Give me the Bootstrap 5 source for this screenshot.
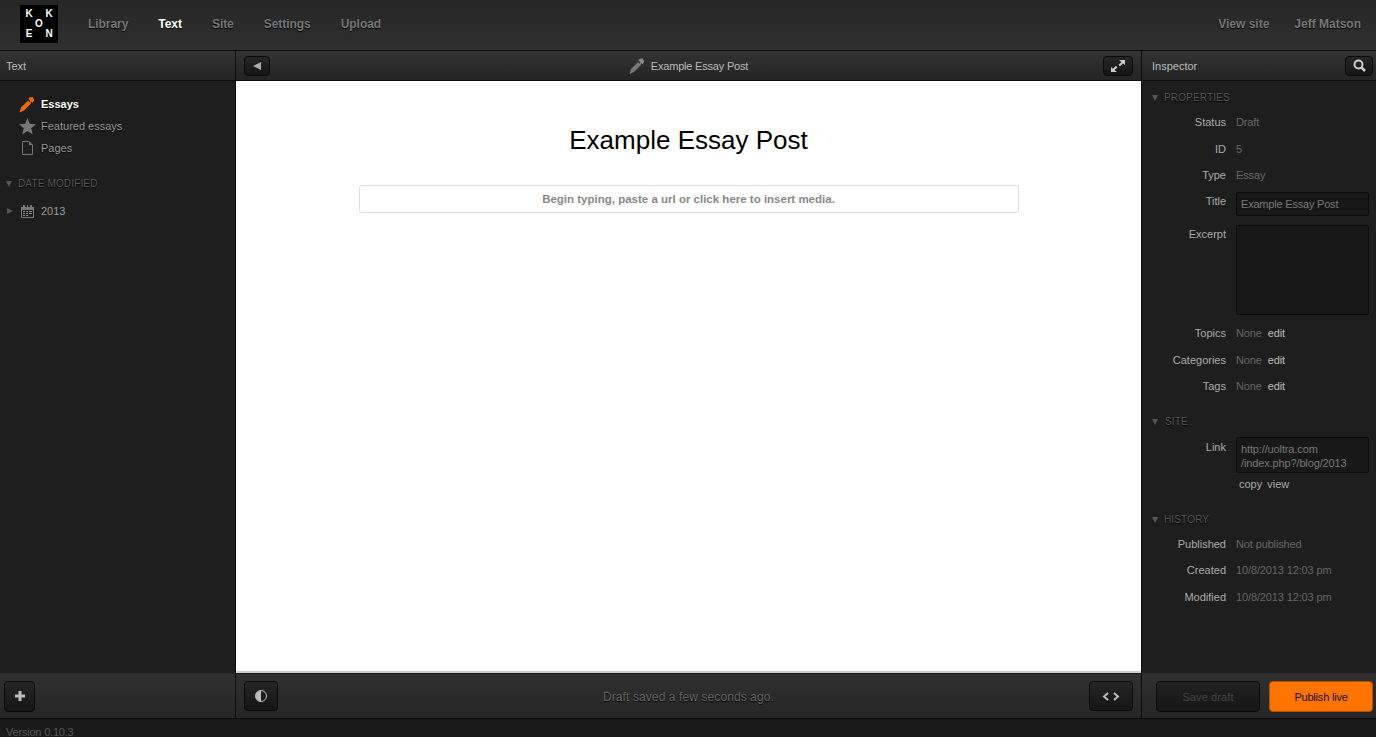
<!DOCTYPE html>
<html lang="en">
<head>
<meta charset="utf-8">
<title>Koken</title>
<link rel="stylesheet" href="https://cdn.jsdelivr.net/npm/bootstrap@5.3.0/dist/css/bootstrap.min.css">
<style>
html,body{height:100%;overflow:hidden}
body{width:1376px;height:737px;background:#1a1a1a;font-family:"Liberation Sans",Arial,sans-serif;font-size:11px;color:#999;line-height:14px;display:flex;flex-direction:column}
a{text-decoration:none;color:inherit}
.kk-top{height:51px;flex:none;background:linear-gradient(#262626,#303030);border-bottom:1px solid #0c0c0c;padding:5px 15px 0 20px}
.kk-logo{width:38px;height:38px;background:#000;color:#fff;font-weight:700;font-size:10px;line-height:10px;display:grid;grid-template-columns:repeat(3,minmax(0,1fr));grid-template-rows:repeat(3,minmax(0,1fr));padding:4px;margin-right:30px;text-align:center;align-items:center;justify-items:center}
.kk-nav{gap:30px;font-size:12px;font-weight:700;color:#777;height:38px;text-shadow:0 1px 1px #000;letter-spacing:-.05px}
.kk-nav .on{color:#fff}
.kk-nav .kk-r{letter-spacing:0}
.kk-mid{flex:1;min-height:0}
.kk-left{width:236px;flex:none;border-right:1px solid #0c0c0c;background:#1e1e1e}
.kk-right{width:235px;flex:none;border-left:1px solid #0c0c0c;background:#1e1e1e}
.kk-center{flex:1;min-width:0}
.kk-head{height:30px;flex:none;background:linear-gradient(#333,#242424);border-bottom:1px solid #0c0c0c;color:#bbb;padding:0 6px}
.kk-foot{height:45px;flex:none;background:linear-gradient(#303030,#262626);border-top:1px solid #2c2c2c}
.kk-body{flex:1;min-height:0}
.kk-btn{background:linear-gradient(#262626,#151515);border:1px solid #0a0a0a;border-radius:4px;display:flex;align-items:center;justify-content:center;padding:0}
.kk-menu{padding:12px 0 0 17px}
.kk-item{height:22px;color:#999;text-shadow:0 1px 1px #000}
.kk-item.on{color:#fff;font-weight:700}
.kk-ico{width:21px;flex:none;display:flex;justify-content:center;margin-right:3px}
.kk-sec{font-size:10px;color:#555;letter-spacing:.15px;text-shadow:0 1px 1px #000;height:14px}
.kk-tri{width:0;height:0;border-left:3.5px solid transparent;border-right:3.5px solid transparent;border-top:6px solid #555;margin-right:6px}
.kk-trir{width:0;height:0;border-top:3.5px solid transparent;border-bottom:3.5px solid transparent;border-left:6px solid #555}
.kk-canvas{background:#fff;flex:1;border-bottom:2px solid #ccc;padding-top:44px}
.kk-h{font-size:26px;line-height:30px;color:#000;font-weight:400;text-align:center;margin:0 0 30px}
.kk-insert{width:660px;height:28px;border:1px solid #ddd;border-radius:3px;margin:0 auto;color:#888;font-weight:700;font-size:11.5px;display:flex;align-items:center;justify-content:center}
.kk-title{letter-spacing:-.2px}
.kk-status{color:#666;font-size:12px;letter-spacing:.1px;flex:1;text-align:center;padding-top:1px;text-shadow:0 1px 1px #000}
.kk-row{display:flex}
.kk-lab{width:84px;text-align:right;margin-right:10px;color:#aaa;flex:none}
.kk-val{color:#666;letter-spacing:-.13px}
.kk-edit{color:#bbb;margin-left:6px;letter-spacing:-.13px}
.kk-field{width:133px;background:#181818;border:1px solid #0c0c0c;border-radius:2px;color:#777}
.kk-save{width:104px;height:31px;color:#444;background:linear-gradient(#222,#161616);padding-top:2px;letter-spacing:.1px}
.kk-pub{width:104px;height:31px;background:#ff7300;color:#111;border:1px solid #b55200;border-radius:4px;padding:2px 0 0;letter-spacing:-.2px}
.kk-ver{height:19px;flex:none;background:#1a1a1a;border-top:1px solid #0c0c0c;padding:6px 0 0 6px;color:#555;line-height:14px;letter-spacing:-.2px}
</style>
</head>
<body>
<header class="kk-top d-flex align-items-start">
  <div class="kk-logo"><span>K</span><span></span><span>K</span><span></span><span>O</span><span></span><span>E</span><span></span><span>N</span></div>
  <nav class="kk-nav d-flex align-items-center flex-grow-1">
    <a href="#">Library</a><a href="#" class="on">Text</a><a href="#">Site</a><a href="#">Settings</a><a href="#">Upload</a>
    <a href="#" class="ms-auto kk-r">View site</a><a href="#" class="kk-r" style="margin-left:-5px">Jeff Matson</a>
  </nav>
</header>
<div class="kk-mid d-flex">
  <aside class="kk-left d-flex flex-column">
    <div class="kk-head d-flex align-items-center">Text</div>
    <div class="kk-body">
      <div class="kk-menu d-flex flex-column">
        <a href="#" class="kk-item on d-flex align-items-center"><span class="kk-ico"><svg width="17" height="17" viewBox="0 0 17 17"><path d="M.5 16.500l1.500-5L9 4.500l3 3-7 7z" fill="#f26a00"/><path d="M10.500 1.500c2-2 6 1.500 4 4l-1.200 1.200L9.300 2.700z" fill="#f26a00"/><path d="M13.800 1l-3 6.500" stroke="#f26a00" stroke-width="1"/></svg></span><span>Essays</span></a>
        <a href="#" class="kk-item d-flex align-items-center"><span class="kk-ico"><svg width="17" height="17" viewBox="0 0 17 17"><path d="M8.500 0l2.300 5.800 6.200.4-4.800 4 1.600 6.200-5.300-3.400-5.300 3.400 1.600-6.200L0 6.200l6.200-.4z" fill="#777"/></svg></span><span>Featured essays</span></a>
        <a href="#" class="kk-item d-flex align-items-center"><span class="kk-ico"><svg width="11" height="14" viewBox="0 0 11 14"><path d="M.5.5h6.500l3.500 3.500v9.500h-10z" fill="none" stroke="#777"/><path d="M7 .5v3.500h3.500z" fill="#777"/></svg></span><span>Pages</span></a>
      </div>
      <div class="kk-sec d-flex align-items-center" style="margin:18px 0 0 6px">
        <span class="kk-tri"></span>DATE MODIFIED
      </div>
      <div class="d-flex align-items-center" style="margin:13px 0 0 7px;height:14px">
        <span class="kk-trir" style="margin-right:8px"></span>
        <svg width="13" height="13" viewBox="0 0 13 13" style="margin-right:7px"><path d="M0 2h13v11H0z" fill="#777"/><path d="M1 5h11v7H1z" fill="#1e1e1e"/><path d="M2 0h2v3H2zM6 0h1v3H6zM9 0h2v3H9z" fill="#777"/><path d="M2 6h2v1H2zM5 6h2v1H5zM8 6h3v1H8zM2 8h2v1H2zM5 8h2v1H5zM8 8h3v1H8zM2 10h2v1H2zM5 10h2v1H5z" fill="#888"/></svg>
        <span>2013</span>
      </div>
    </div>
    <div class="kk-foot d-flex align-items-center" style="padding-left:4px">
      <button class="kk-btn" style="width:31px;height:31px" aria-label="Add"><svg width="10" height="10" viewBox="0 0 10 10"><path d="M3.500 0h3v3.500H10v3H6.500V10h-3V6.500H0v-3h3.500z" fill="#bbb"/></svg></button>
    </div>
  </aside>
  <main class="kk-center d-flex flex-column">
    <div class="kk-head d-flex align-items-center" style="padding:0 8px">
      <button class="kk-btn" style="width:26px;height:20px" aria-label="Back"><span style="width:0;height:0;border-top:4px solid transparent;border-bottom:4px solid transparent;border-right:8px solid #aaa"></span></button>
      <div class="d-flex align-items-center justify-content-center flex-grow-1 kk-title" style="gap:5px;margin-left:4px">
        <svg width="17" height="18" viewBox="0 0 17 17"><path d="M.5 16.500l1.500-5L9 4.500l3 3-7 7z" fill="#777"/><path d="M10.500 1.500c2-2 6 1.500 4 4l-1.200 1.200L9.300 2.700z" fill="#888"/><path d="M13.800 1l-3 6.500" stroke="#888" stroke-width="1"/></svg>
        <span>Example Essay Post</span>
      </div>
      <button class="kk-btn" style="width:30px;height:20px" aria-label="Expand"><svg width="14" height="12" viewBox="0 0 14 12"><path d="M8 0h6v5l-2-1.800-3 3-1.500-1.500 3-2.700zM6 12H0V7l2 1.800 3-3 1.500 1.500-3 2.700z" fill="#ccc"/></svg></button>
    </div>
    <div class="kk-canvas">
      <h1 class="kk-h">Example Essay Post</h1>
      <div class="kk-insert">Begin typing, paste a url or click here to insert media.</div>
    </div>
    <div class="kk-foot d-flex align-items-center" style="padding:0 8px;border-top-color:#1a1a1a">
      <button class="kk-btn" style="width:34px;height:30px;margin-right:10px" aria-label="Contrast"><svg width="12" height="12" viewBox="0 0 12 12"><circle cx="6" cy="6" r="5.500" fill="none" stroke="#bbb"/><path d="M6 .5a5.500 5.500 0 0 0 0 11z" fill="#bbb"/></svg></button>
      <span class="kk-status">Draft saved a few seconds ago.</span>
      <button class="kk-btn" style="width:44px;height:30px" aria-label="Code"><svg width="18" height="9" viewBox="0 0 18 9"><path d="M6 1L2 4.500 6 8M12 1l4 3.500L12 8" fill="none" stroke="#bbb" stroke-width="2"/></svg></button>
    </div>
  </main>
  <aside class="kk-right d-flex flex-column">
    <div class="kk-head d-flex align-items-center justify-content-between" style="padding:0 3px 0 10px">
      <span>Inspector</span>
      <button class="kk-btn" style="width:28px;height:20px" aria-label="Search"><svg width="13" height="13" viewBox="0 0 13 13"><circle cx="5.500" cy="5.500" r="4" fill="none" stroke="#ccc" stroke-width="2"/><path d="M8.500 8.500L12 12" stroke="#ccc" stroke-width="2.500"/></svg></button>
    </div>
    <div class="kk-body">
      <div class="kk-sec d-flex align-items-center" style="margin:10px 0 0 10px"><span class="kk-tri"></span>PROPERTIES</div>
      <div class="kk-row" style="margin-top:10px"><span class="kk-lab">Status</span><span class="kk-val">Draft</span></div>
      <div class="kk-row" style="margin-top:13px"><span class="kk-lab">ID</span><span class="kk-val">5</span></div>
      <div class="kk-row" style="margin-top:12px"><span class="kk-lab">Type</span><span class="kk-val">Essay</span></div>
      <div class="kk-row" style="margin-top:10px"><span class="kk-lab" style="padding-top:2px">Title</span><div class="kk-field kk-title" style="height:24px;padding:4px 4px">Example Essay Post</div></div>
      <div class="kk-row" style="margin-top:9px"><span class="kk-lab" style="padding-top:2px">Excerpt</span><div class="kk-field" style="height:90px"></div></div>
      <div class="kk-row" style="margin-top:11px"><span class="kk-lab">Topics</span><span class="kk-val">None</span><a href="#" class="kk-edit">edit</a></div>
      <div class="kk-row" style="margin-top:13px"><span class="kk-lab">Categories</span><span class="kk-val">None</span><a href="#" class="kk-edit">edit</a></div>
      <div class="kk-row" style="margin-top:12px"><span class="kk-lab">Tags</span><span class="kk-val">None</span><a href="#" class="kk-edit">edit</a></div>
      <div class="kk-sec d-flex align-items-center" style="margin:22px 0 0 10px"><span class="kk-tri"></span><span style="margin-left:1px">SITE</span></div>
      <div class="kk-row" style="margin-top:8px"><span class="kk-lab" style="padding-top:3px">Link</span><div class="kk-field kk-val" style="height:36px;padding:4px;color:#777">http://uoltra.com<br>/index.php?/blog/2013</div></div>
      <div class="kk-row" style="margin:4px 0 0 97px;gap:5px;color:#aaa"><a href="#">copy</a><a href="#">view</a></div>
      <div class="kk-sec d-flex align-items-center" style="margin:22px 0 0 10px"><span class="kk-tri"></span>HISTORY</div>
      <div class="kk-row" style="margin-top:10px"><span class="kk-lab">Published</span><span class="kk-val">Not published</span></div>
      <div class="kk-row" style="margin-top:12px"><span class="kk-lab">Created</span><span class="kk-val">10/8/2013 12:03 pm</span></div>
      <div class="kk-row" style="margin-top:13px"><span class="kk-lab">Modified</span><span class="kk-val">10/8/2013 12:03 pm</span></div>
    </div>
    <div class="kk-foot d-flex align-items-center justify-content-between" style="padding:0 3px 0 14px">
      <button class="kk-btn kk-save">Save draft</button>
      <button class="kk-pub">Publish live</button>
    </div>
  </aside>
</div>
<footer class="kk-ver">Version 0.10.3</footer>
</body>
</html>
